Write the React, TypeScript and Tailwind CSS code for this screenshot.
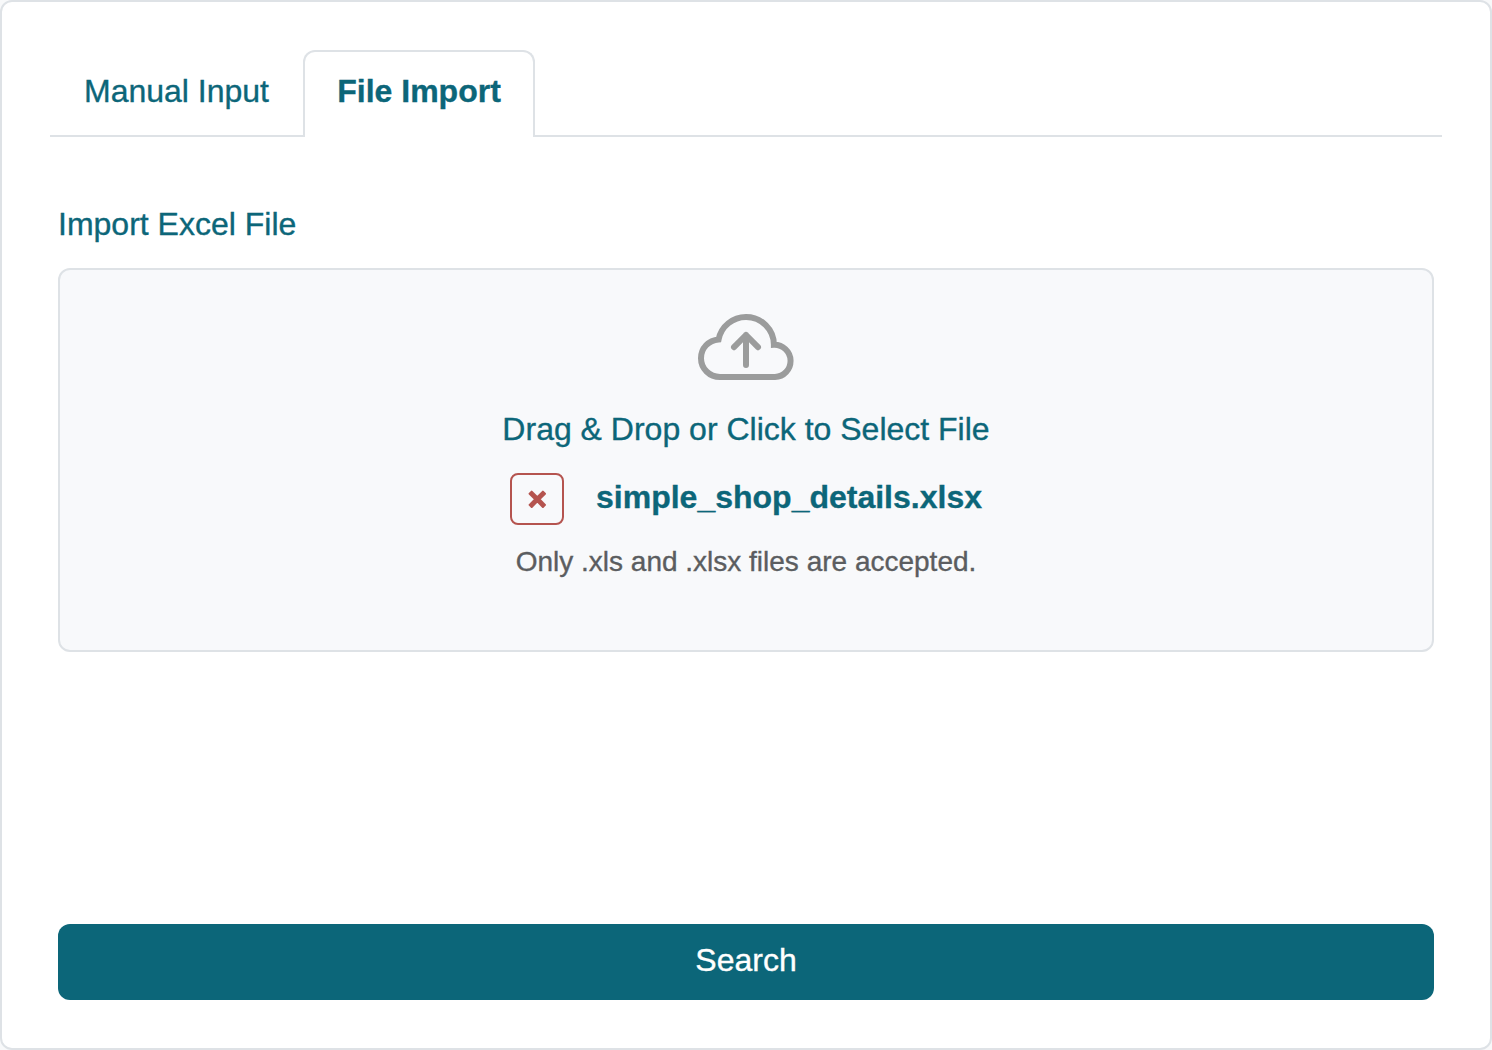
import React from "react";

function CloudUploadIcon() {
  return (
    <svg width="96" height="66" viewBox="0 0 96 66" fill="none" stroke="#9b9c9c" strokeWidth="6">
      <path d="M20.6 25.4A28 28 0 0 1 48.1 3A27.8 27.8 0 0 1 75.9 30.8A16.1 16.1 0 0 1 77 63H22A19 18.8 0 0 1 3 44.2A18.8 18.8 0 0 1 20.6 25.4Z" />
      <path d="M48 51V21M36 33.2L48 21L60 33.2" strokeLinecap="round" strokeLinejoin="round" />
    </svg>
  );
}

function RemoveIcon() {
  return (
    <svg width="18" height="18" viewBox="0.2 0.2 18 18" fill="currentColor" stroke="currentColor" strokeWidth="2" strokeLinejoin="round">
      <path d="M3.9 1.8L9.5 7.4L15.1 1.8L17.2 3.9L11.6 9.5L17.2 15.1L15.1 17.2L9.5 11.6L3.9 17.2L1.8 15.1L7.4 9.5L1.8 3.9Z" />
    </svg>
  );
}

function Tabs() {
  return (
    <div role="tablist" className="flex h-[87px] items-end">
      <button className="h-[87px] w-[253px] border-b-2 border-[#dee2e6] pb-1">Manual Input</button>
      <button className="h-[87px] w-[232px] rounded-t-xl border-2 border-b-0 border-[#dee2e6] pb-2 font-bold">
        File Import
      </button>
      <div className="h-[87px] flex-1 border-b-2 border-[#dee2e6]" />
    </div>
  );
}

function DropZone() {
  return (
    <div className="flex h-[384px] flex-col items-center rounded-xl border-2 border-[#dee2e6] bg-[#f8f9fb] pt-11">
      <CloudUploadIcon />
      <p className="mt-[25px] whitespace-nowrap">Drag &amp; Drop or Click to Select File</p>
      <div className="mt-5 flex items-start">
        <button
          aria-label="Remove file"
          className="flex h-[52px] w-[54px] items-center justify-center rounded-lg border-2 border-[#b5544f] text-[#b5544f]"
        >
          <RemoveIcon />
        </button>
        <span className="ml-8 font-bold">simple_shop_details.xlsx</span>
      </div>
      <p className="mt-4 text-[28px] leading-[42px] text-[#5b5d60]">Only .xls and .xlsx files are accepted.</p>
    </div>
  );
}

export default function App() {
  return (
    <div className="h-[1050px] w-[1492px] bg-[#f8f9fa]">
      <main className="flex h-full flex-col rounded-xl border-2 border-[#dee2e6] bg-white p-12 font-['Liberation_Sans',sans-serif] text-[32px] leading-[48px] text-[#0c6679] [-webkit-text-stroke:0.35px_currentColor]">
        <Tabs />
        <section className="flex flex-1 flex-col px-2 pt-[63px]">
          <h2 className="mb-5">Import Excel File</h2>
          <DropZone />
          <button className="mt-auto h-[76px] rounded-xl bg-[#0c6679] pb-1 text-white">Search</button>
        </section>
      </main>
    </div>
  );
}
